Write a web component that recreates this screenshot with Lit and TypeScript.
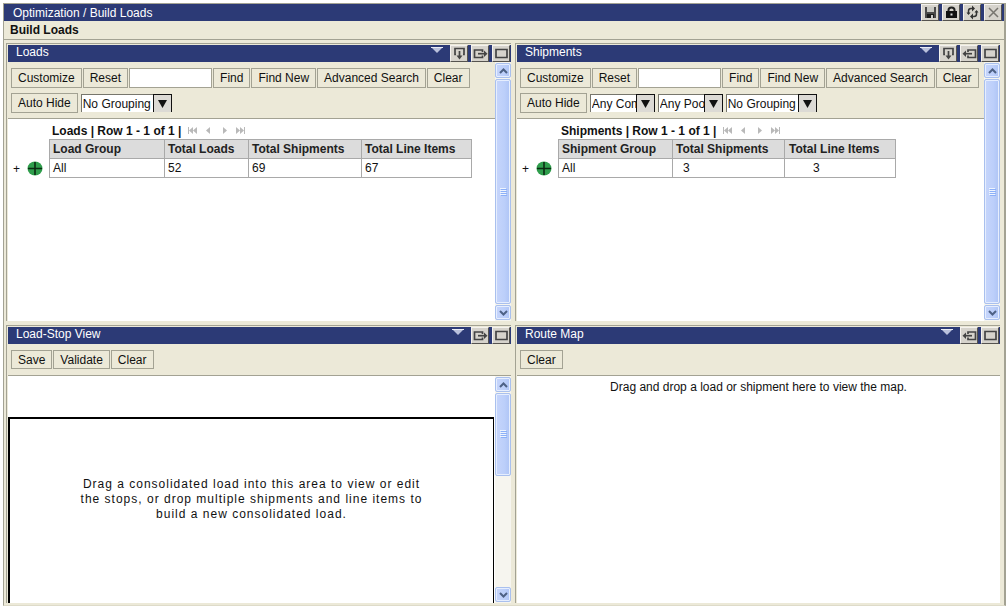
import { LitElement, html, css, svg, nothing } from "lit";
import { customElement, property } from "lit/decorators.js";

const glyphs: Record<string, unknown> = {
  save: svg`<path d="M2 2h11v11H2z" fill="#4a4a4a"/><path d="M4 2h7v5H4z" fill="#c9c9c4"/><path d="M4 9h7v4H4z" fill="#1c1c1c"/><path d="M8 10h2v3H8z" fill="#ccc"/>`,
  lock: svg`<path d="M4.500 7V5q0-2.500 3-2.500t3 2.500V7" fill="none" stroke="#222" stroke-width="2"/><path d="M2 6h11v7H2z" fill="#111"/><path d="M6.500 8.500h2v2h-2z" fill="#ddd"/>`,
  refresh: svg`<path d="M3.500 9V6q0-2.500 2.500-2.500h2M11.500 6v3q0 2.500-2.500 2.500H7" fill="none" stroke="#333" stroke-width="1.500"/><path d="M7 .5l3 3-3 3zM8 8.500l-3 3 3 3zM9.500 7.500L11.500 5l2 2.500zM1.500 7.500l2 2.500 2-2.500z" fill="#333"/>`,
  close: svg`<path d="M3 3l9 9M12 3l-9 9" stroke="#77756f" stroke-width="1.500"/>`,
  down: svg`<path d="M4 8.500H3v-6h9v6h-1" fill="none" stroke="#444" stroke-width="1.700"/><path d="M7.500 5v6" stroke="#444" stroke-width="1.700"/><path d="M4.500 9.500h6l-3 4z" fill="#444"/>`,
  right: svg`<path d="M9.500 9.500v2H1.500V4h8v2" fill="none" stroke="#444" stroke-width="1.700"/><path d="M5 7.700h7" stroke="#444" stroke-width="1.700"/><path d="M11 4.500v6.400l3.500-3.200z" fill="#444"/>`,
  left: svg`<path d="M6 6V4h7.500v7.500H6v-2" fill="none" stroke="#444" stroke-width="1.700"/><path d="M3 7.700h7" stroke="#444" stroke-width="1.700"/><path d="M4 4.500v6.400L.5 7.700z" fill="#444"/>`,
  max: svg`<path d="M2 3.500h11v8H2z" fill="none" stroke="#444" stroke-width="1.700"/>`,
};

const names: Record<string, string> = {
  save: "Save layout", lock: "Lock", refresh: "Refresh", close: "Close",
  down: "Expand down", right: "Expand right", left: "Expand left", max: "Maximize",
};

const iconButton = (name: string) => html`
  <button class="icon" aria-label=${names[name]}><svg width="15" height="15" viewBox="0 0 15 15">${glyphs[name]}</svg></button>`;

const base = css`
  * { box-sizing: border-box; }
  button, input, select { font: inherit; color: inherit; margin: 0; border-radius: 0; }
  button { padding: 0; }
  svg { display: block; }
  .icon {
    width: 18px; height: 17px; flex: none; display: grid; place-items: center;
    background: #d6d3cc; border: 1px solid; border-color: #f4f2ee #55534f #55534f #f4f2ee;
    overflow: hidden;
  }
`;

@customElement("scroll-rail")
export class ScrollRail extends LitElement {
  @property({ type: Boolean }) partial = false;
  static styles = [base, css`
    :host { display: flex; flex-direction: column; width: 16px; flex: none; background: #f6f5ef; padding: 1px 0; gap: 1px; }
    button, .thumb { border: 1px solid #a9c0ee; box-shadow: inset 0 0 0 1px #e6eefe; border-radius: 2px;
      background: linear-gradient(90deg, #c6d5fb, #bccffa 60%, #aec4f5); }
    button { height: 15px; display: grid; place-items: center; flex: none; }
    .track { flex: 1; min-height: 0; }
    .thumb { height: 100%; display: grid; place-items: center; }
    .short { height: 43%; }
  `];
  render() {
    return html`
      <button aria-label="Scroll up"><svg width="9" height="6" viewBox="0 0 9 6"><path d="M1 5l3.500-3.500L8 5" fill="none" stroke="#4d6185" stroke-width="2"/></svg></button>
      <div class="track"><div class="thumb ${this.partial ? "short" : ""}">
        <svg width="7" height="8" viewBox="0 0 7 8"><path d="M0 .5h6M0 2.500h6M0 4.500h6M0 6.500h6" stroke="#eef4fe"/><path d="M1 1.500h6M1 3.500h6M1 5.500h6M1 7.500h6" stroke="#8cb0f8"/></svg>
      </div></div>
      <button aria-label="Scroll down"><svg width="9" height="6" viewBox="0 0 9 6"><path d="M1 1l3.500 3.500L8 1" fill="none" stroke="#4d6185" stroke-width="2"/></svg></button>`;
  }
}

@customElement("load-panel")
export class LoadPanel extends LitElement {
  @property() heading = "";
  @property({ attribute: false }) icons: string[] = [];
  @property() scroll: "" | "full" | "body" = "";

  static styles = [base, css`
    :host { display: flex; flex-direction: column; min-width: 0; min-height: 0;
      border: 1px solid #a3a293; border-width: 1px 0 0 1px; padding: 1px 0 0 1px; background: #ece9d8; }
    .head { display: flex; align-items: center; gap: 3px; height: 17px; flex: none; padding: 0 1px 0 8px;
      background: #2c3a76; color: #fff; }
    h2 { margin: 0; font-size: 12px; font-weight: 400; line-height: 14px; flex: 1; align-self: flex-start; }
    .caret { align-self: flex-start; }
    .body { display: flex; flex: 1; min-height: 0; }
    .main { display: flex; flex-direction: column; flex: 1; min-width: 0; }
    .tools { flex: none; display: flex; flex-direction: column; gap: 5px; padding: 6px 0 5px 3px; border-bottom: 1px solid #a3a293; }
    .content { display: flex; flex: 1; min-height: 0; background: #fff; }
    .slot { flex: 1; min-width: 0; display: flex; flex-direction: column; }
  `];
  render() {
    return html`
      <div class="head">
        <h2>${this.heading}</h2>
        <svg class="caret" width="16" height="9" viewBox="0 0 16 9"><path d="M0 2h12L6 8z" fill="#b9c0dc"/><path d="M0 2.500h12" stroke="#e8eaf4"/></svg>
        ${this.icons.map(iconButton)}
      </div>
      <div class="body">
        <div class="main">
          <div class="tools"><slot name="tools"></slot></div>
          <div class="content">
            <div class="slot"><slot></slot></div>
            ${this.scroll === "body" ? html`<scroll-rail partial></scroll-rail>` : nothing}
          </div>
        </div>
        ${this.scroll === "full" ? html`<scroll-rail></scroll-rail>` : nothing}
      </div>`;
  }
}

interface Grid { title: string; kind: string; columns: string[]; cells: string[]; }
const loads: Grid = { title: "Loads", kind: "loads",
  columns: ["Load Group", "Total Loads", "Total Shipments", "Total Line Items"], cells: ["All", "52", "69", "67"] };
const shipments: Grid = { title: "Shipments", kind: "shipments",
  columns: ["Shipment Group", "Total Shipments", "Total Line Items"], cells: ["All", "3", "3"] };

@customElement("app-root")
export class AppRoot extends LitElement {
  static styles = [base, css`
    :host { display: flex; flex-direction: column; height: 100vh; min-height: 560px; box-sizing: border-box;
      padding: 3px 2px 5px 3px; background: #fff; color: #111; font: 12px/14px "Liberation Sans", Arial, sans-serif; }
    .frame { flex: 1; min-height: 0; display: flex; flex-direction: column; background: #ece9d8;
      border: 1px solid #a3a293; border-right-width: 2px; border-bottom-color: #dedbc9; }
    .title { display: flex; align-items: center; gap: 3px; height: 17px; padding: 0 2px 0 9px; background: #2c3a76; color: #fff; flex: none; }
    .title span { flex: 1; }
    h1 { margin: 0; padding: 0 6px; font-size: 12px; line-height: 18px; border-bottom: 1px solid #a3a293; flex: none; }
    .panels { flex: 1; min-height: 0; display: grid; gap: 4px; padding: 3px 4px 2px 2px;
      grid-template-columns: minmax(0, 505fr) minmax(0, 485fr); grid-template-rows: minmax(0, 1fr) minmax(0, 1fr); }
    .row { display: flex; align-items: center; gap: 1px; height: 20px; }
    .row button { height: 20px; padding: 0 6px; background: #ece9d8; border: 1px solid #a3a293; white-space: nowrap; }
    .single button { height: 19px; align-self: flex-start; }
    .row input { width: 83px; height: 20px; border: 1px solid #a3a293; background: #fff; padding: 0 3px; }
    .pick { position: relative; flex: none; height: 18px; width: 65px; margin-left: 2px; }
    .wide { width: 91px; }
    .pick select { appearance: none; width: 100%; height: 18px; border: 1px solid #77766c; border-width: 1px 0 0 1px; background: #fff;
      padding: 0 19px 0 1px; overflow: hidden; }
    .arrow { position: absolute; right: 0; top: 0; width: 19px; height: 18px; background: #dcdad5; border: 1px solid #111;
      border-bottom: 0; display: grid; place-items: center; pointer-events: none; }
    .pager { display: flex; align-items: center; padding: 4px 0 1px 44px; font-weight: 700; gap: 7px; height: 20px; }
    .nav { display: flex; gap: 7px; }
    .nav button { border: 0; background: none; width: 9px; height: 9px; display: grid; place-items: center; }
    .list { display: flex; align-items: flex-end; }
    .expand { width: 41px; height: 19px; display: flex; align-items: center; gap: 7px; padding-left: 5px; flex: none; }
    .expand button { border: 0; background: none; }
    table { border-collapse: collapse; table-layout: fixed; }
    th, td { border: 1px solid #a9a9a9; text-align: left; padding: 0 3px; line-height: 18px; }
    th { background: #dcdcdc; color: #222; white-space: nowrap; }
    .loads { width: 423px; }
    .shipments { width: 338px; }
    .loads th:nth-child(1) { width: 115px; }
    .loads th:nth-child(2) { width: 84px; }
    .loads th:nth-child(3) { width: 113px; }
    .shipments th:nth-child(1) { width: 114px; }
    .shipments th:nth-child(2) { width: 112px; }
    .shipments th:nth-child(3) { padding-left: 4px; }
    .shipments td:nth-child(2) { padding-left: 10px; }
    .shipments td:nth-child(3) { padding-left: 28px; }
    .drop { flex: 1; margin: 41px 1px 0 0; border: 2px solid #000; border-width: 2px 1px 0 2px; padding: 58px 64px 0;
      text-align: center; line-height: 15px; letter-spacing: 1px; }
    .hint { margin: 0; padding-top: 4px; text-align: center; }
    p { margin: 0; }
  `];

  private buttons(labels: string[]) { return labels.map((l) => html`<button>${l}</button>`); }

  private pick(label: string, option: string, wide = false) {
    return html`<span class="pick ${wide ? "wide" : ""}">
      <select aria-label=${label}><option>${option}</option></select>
      <span class="arrow"><svg width="9" height="9" viewBox="0 0 9 9"><path d="M0 1h9L4.500 9z" fill="#111"/></svg></span>
    </span>`;
  }

  private search(kind: string, picks: unknown) {
    return html`
      <div class="row" slot="tools">${this.buttons(["Customize", "Reset"])}<input type="text" aria-label="Find ${kind}">${this.buttons(["Find", "Find New", "Advanced Search", "Clear"])}</div>
      <div class="row" slot="tools"><button>Auto Hide</button>${picks}</div>`;
  }

  private nav(label: string, d: string) {
    return html`<button aria-label=${label}><svg width="9" height="9" viewBox="0 0 9 9"><path d=${d} fill="#b9b9b9"/></svg></button>`;
  }

  private grid(g: Grid) {
    return html`
      <div class="pager"><span>${g.title} | Row 1 - 1 of 1 |</span>
        <span class="nav">
          ${this.nav("First", "M0 1h1v7H0zM5 1v7L1 4.500zM9 1v7L5 4.500z")}
          ${this.nav("Previous", "M6 1v7L2 4.500z")}
          ${this.nav("Next", "M3 1v7l4-3.500z")}
          ${this.nav("Last", "M8 1h1v7H8zM0 1v7l4-3.500zM4 1v7l4-3.500z")}
        </span>
      </div>
      <div class="list">
        <span class="expand"><button aria-label="Expand group">+</button>
          <svg width="16" height="15" viewBox="0 0 16 15"><ellipse cx="8" cy="7.500" rx="7.500" ry="7" fill="#2f9e4c"/><path d="M8 1v13M1 7.500h14" stroke="#0b2a12" stroke-width="1.600"/></svg>
        </span>
        <table class=${g.kind}>
          <thead><tr>${g.columns.map((c) => html`<th scope="col">${c}</th>`)}</tr></thead>
          <tbody><tr>${g.cells.map((c) => html`<td>${c}</td>`)}</tr></tbody>
        </table>
      </div>`;
  }

  render() {
    return html`
      <div class="frame">
        <div class="title"><span>Optimization / Build Loads</span>${["save", "lock", "refresh", "close"].map(iconButton)}</div>
        <h1>Build Loads</h1>
        <div class="panels">
          <load-panel heading="Loads" scroll="full" .icons=${["down", "right", "max"]}>
            ${this.search("loads", this.pick("Load grouping", "No Grouping", true))}
            ${this.grid(loads)}
          </load-panel>
          <load-panel heading="Shipments" scroll="full" .icons=${["down", "left", "max"]}>
            ${this.search("shipments", html`${this.pick("Commodity", "Any Commodity")}${this.pick("Pool", "Any Pool")}${this.pick("Shipment grouping", "No Grouping", true)}`)}
            ${this.grid(shipments)}
          </load-panel>
          <load-panel heading="Load-Stop View" scroll="body" .icons=${["right", "max"]}>
            <div class="row single" slot="tools">${this.buttons(["Save", "Validate", "Clear"])}</div>
            <div class="drop"><p>Drag a consolidated load into this area to view or edit the stops, or drop multiple shipments and line items to build a new consolidated load.</p></div>
          </load-panel>
          <load-panel heading="Route Map" .icons=${["left", "max"]}>
            <div class="row single" slot="tools">${this.buttons(["Clear"])}</div>
            <p class="hint">Drag and drop a load or shipment here to view the map.</p>
          </load-panel>
        </div>
      </div>`;
  }
}
